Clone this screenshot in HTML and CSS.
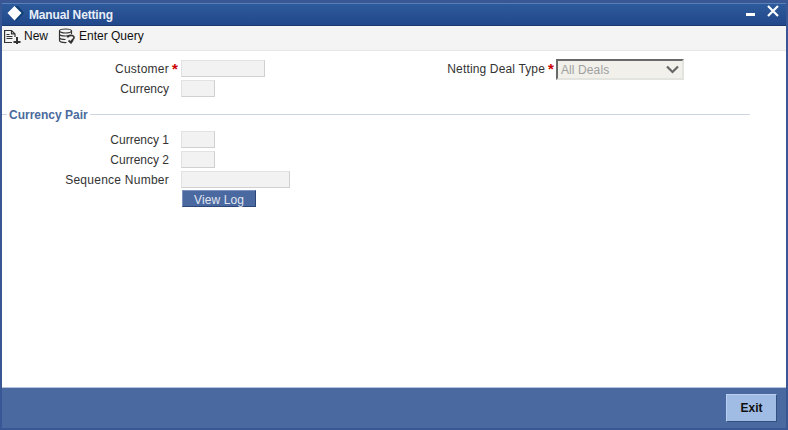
FILE: index.html
```html
<!DOCTYPE html>
<html lang="en">
<head>
    <meta charset="UTF-8">
    <meta name="viewport" content="width=device-width, initial-scale=1.0">
    <title>Manual Netting</title>
    <link rel="stylesheet" href="styles.css">
</head>
<body>
    <div class="window">
        <header class="titlebar">
            <svg class="logo" width="18" height="18" viewBox="0 0 18 18">
                <path d="M9 0h3l6 7-7 7.500H9z" fill="#0d3f75"/>
                <path d="M8.500 0l7 7-7 7.500L1.500 7z" fill="#fff"/>
            </svg>
            <h1>Manual Netting</h1>
            <div class="window-buttons">
                <svg width="9" height="14" viewBox="0 0 9 14"><path d="M0 8h9v3H0z" fill="#fff"/></svg>
                <svg width="12" height="14" viewBox="0 0 12 14"><path d="M1 1l10 10M11 1L1 11" stroke="#fff" stroke-width="2.200"/></svg>
            </div>
        </header>

        <nav class="toolbar">
            <a class="tool">
                <svg class="new-icon" width="17" height="15" viewBox="0 0 17 15" fill="none" stroke="#333">
                    <path d="M8 13.500H.600V1.500h7l3.400 3.400V8M7.500 1.500v3.400H11" stroke-width="1.200"/>
                    <path d="M2.500 5.500h3M2.500 7.500h6M2.500 9.500h6"/>
                    <path d="M13 8v7M9.500 13h7" stroke-width="2"/>
                </svg>
                <span>New</span>
            </a>
            <a class="tool">
                <svg class="query-icon" width="18" height="16" viewBox="0 0 18 16" fill="none" stroke="#333" stroke-width="1.200">
                    <ellipse cx="7.500" cy="3" rx="6" ry="2"/>
                    <path d="M1.500 3v9.500c0 1.300 2.500 2.200 7 2M13.500 3v3M1.500 6c0 1.400 2.500 2 6 2 2 0 3.500-.2 4.500-.7M1.500 9.500c0 1.400 2.500 2 6 2"/>
                    <path d="M9.500 9.500C10 7 16 6.500 16 9.500c0 2.200-2.800 2-3 4.500M10.500 12.500l2.500 2.300 2-2.800" stroke-width="1.700"/>
                </svg>
                <span>Enter Query</span>
            </a>
        </nav>

        <main>
            <div class="form-columns">
                <div class="form-column">
                    <div class="row"><label class="wide">Customer</label><span class="required">*</span><input class="medium" disabled></div>
                    <div class="row"><label>Currency</label><span class="required"></span><input class="short" disabled></div>
                </div>
                <div class="form-column right">
                    <div class="row">
                        <label>Netting Deal Type</label><span class="required">*</span>
                        <div class="select">
                            <span>All Deals</span>
                            <svg width="13" height="9" viewBox="0 0 13 9"><path d="M1 1.500l5.500 5.500L12 1.500" fill="none" stroke="#666" stroke-width="2.200"/></svg>
                        </div>
                    </div>
                </div>
            </div>

            <section class="group">
                <h2>Currency Pair</h2>
                <div class="row"><label>Currency 1</label><span class="required"></span><input class="short" disabled></div>
                <div class="row"><label>Currency 2</label><span class="required"></span><input class="short" disabled></div>
                <div class="row"><label class="wide">Sequence Number</label><span class="required"></span><input class="long" disabled></div>
                <button class="view-log">View Log</button>
            </section>
        </main>

        <footer>
            <button class="exit">Exit</button>
        </footer>
    </div>
</body>
</html>
```

FILE: styles.css
```css
* {
    margin: 0;
    padding: 0;
    box-sizing: border-box;
}

body {
    font-family: "Liberation Sans", Arial, sans-serif;
    font-size: 12px;
    color: #333;
}

.window {
    display: flex;
    flex-direction: column;
    height: 430px;
    border: 2px solid #3a5795;
    border-top-width: 3px;
    background-color: #fff;
}

.titlebar {
    display: flex;
    align-items: center;
    height: 23px;
    padding: 0 7px 0 4px;
    border-top: 1px solid #5780b5;
    border-bottom: 1px solid #1c3a70;
    background: linear-gradient(#2d5a9c, #21488a);
    color: #fff;
}

.titlebar h1 {
    margin-left: 5px;
    font-size: 12px;
    letter-spacing: -0.15px;
    color: #e8eef8;
}

.window-buttons {
    display: flex;
    gap: 12px;
    margin-left: auto;
    margin-top: -6px;
}

.toolbar {
    display: flex;
    height: 25px;
    padding-left: 2px;
    border-bottom: 1px solid #e6e6e6;
    background-color: #f4f4f4;
    color: #111;
}

.tool {
    display: flex;
    gap: 3px;
    height: 20px;
    align-items: center;
    margin-right: 9px;
}

.query-icon {
    margin-left: 1px;
}

main {
    flex: 1;
}

.form-columns {
    display: flex;
    padding-top: 8px;
}

.form-column {
    width: 382px;
}

.row {
    display: flex;
    align-items: center;
    height: 20px;
}

.row label {
    width: 167px;
    text-align: right;
    white-space: nowrap;
}

.row .wide {
    letter-spacing: 0.25px;
}

.right .row label {
    width: 161px;
    letter-spacing: 0.15px;
}

.required {
    width: 12px;
    padding-left: 3px;
    color: #c00;
    font-size: 15px;
    font-weight: bold;
    line-height: 12px;
    height: 12px;
}

.right .required {
    width: 11px;
}

.row input {
    height: 17px;
    margin-bottom: 2px;
    border: 1px solid #e2e2e2;
    border-right-color: #d0d0d0;
    border-bottom-color: #d0d0d0;
    background-color: #f2f2f2;
}

.short {
    width: 34px;
}

.medium {
    width: 84px;
}

.long {
    width: 109px;
}

.select {
    display: flex;
    align-items: center;
    justify-content: space-between;
    width: 128px;
    height: 21px;
    padding: 1px 3px 0;
    border: 2px solid #e3e3df;
    border-top-color: #696969;
    border-left-color: #696969;
    background-color: #f1f0ea;
    color: #a0a0a0;
    letter-spacing: 0.1px;
}

.group h2 {
    display: flex;
    align-items: center;
    width: 748px;
    height: 14px;
    margin: 9px 0 8px;
    font-size: 12px;
    color: #4a6a9c;
}

.group h2::before,
.group h2::after {
    content: "";
    height: 1px;
    margin-bottom: 1px;
    background-color: #cbd6e2;
}

.group h2::before {
    width: 5px;
    margin-right: 2px;
}

.group h2::after {
    flex: 1;
    margin-left: 2px;
}

.view-log {
    display: block;
    width: 74px;
    height: 17px;
    margin-left: 180px;
    border: 1px solid #7b93bf;
    border-right-color: #2c4677;
    border-bottom-color: #2c4677;
    background-color: #4a69a0;
    color: #e0e6f0;
    font: 12px "Liberation Sans", Arial, sans-serif;
    letter-spacing: 0.1px;
    line-height: 18px;
}

footer {
    display: flex;
    justify-content: flex-end;
    height: 41px;
    padding: 6px 9px 0 0;
    border-top: 1px solid #b4c2da;
    background-color: #4a69a0;
}

.exit {
    width: 51px;
    height: 28px;
    border: 1px solid #b9d0f0;
    border-right-color: #34507f;
    border-bottom-color: #34507f;
    background-color: #a0bce4;
    color: #111;
    font: bold 12px "Liberation Sans", Arial, sans-serif;
}
```
